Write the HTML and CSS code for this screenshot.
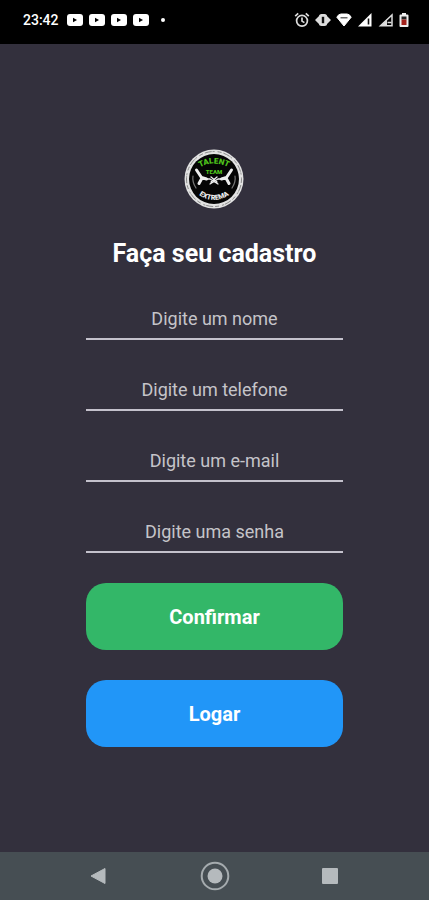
FILE: index.html
```html
<!DOCTYPE html>
<html lang="pt-BR">
<head>
<meta charset="utf-8">
<meta name="viewport" content="width=device-width, initial-scale=1">
<title>Cadastro</title>
<link rel="stylesheet" href="styles.css">
</head>
<body>
<header class="status">
  <div class="status-left">
    <span class="clock">23:42</span>
    <svg class="video" viewBox="0 0 16 12"><rect width="16" height="12" rx="3"/><path class="cut" d="M6 3.8v4.4L10 6z"/></svg>
    <svg class="video" viewBox="0 0 16 12"><rect width="16" height="12" rx="3"/><path class="cut" d="M6 3.8v4.4L10 6z"/></svg>
    <svg class="video" viewBox="0 0 16 12"><rect width="16" height="12" rx="3"/><path class="cut" d="M6 3.8v4.4L10 6z"/></svg>
    <svg class="video" viewBox="0 0 16 12"><rect width="16" height="12" rx="3"/><path class="cut" d="M6 3.8v4.4L10 6z"/></svg>
    <span class="dot"></span>
  </div>
  <div class="status-right">
    <svg viewBox="0 0 16 16"><g fill="none" stroke="#ddd" stroke-width="1.7"><circle cx="8" cy="8.8" r="5.4"/><path d="M8 5.5v3.600l2.400 1.500M1.200 4.200l3-2.800M14.800 4.200l-3-2.800"/></g></svg>
    <svg viewBox="0 0 16 16"><path fill="#ddd" d="M0 8l5-5v10zM16 8l-5-5v10z"/><rect x="4" y="2" width="8" height="12" rx="2.500" fill="#ddd"/><rect x="6.800" y="4.800" width="2.400" height="6.400" fill="#111"/></svg>
    <svg viewBox="0 0 16 16"><path fill="#fff" stroke="#fff" stroke-linejoin="round" d="M.8 5.200Q2.500 2 5 2h6q2.500 0 4.200 3.200L8 14z"/><path d="M4.500 5.800h7" fill="none" stroke="#444" stroke-width="1.200"/></svg>
    <svg viewBox="0 0 16 16"><path fill="#fff" d="M14.500 1v13.500H1z"/><path d="M11.500 6.500v6" stroke="#111" stroke-width="1.600"/></svg>
    <svg viewBox="0 0 16 16"><path fill="none" stroke="#ddd" stroke-width="1.500" d="M14 3v10.800H2.500z"/><path fill="#ddd" d="M9 7.500v6.500H2.500z"/><path d="M9.500 10.500h4" stroke="#ddd" stroke-width="1.500"/></svg>
    <svg class="battery" viewBox="0 0 10 16"><path fill="#eee" d="M3 1h4v1.500h1.500q1 0 1 1V14q0 1-1 1h-7q-1 0-1-1V3.500q0-1 1-1H3z"/><path fill="#222" d="M2.500 4.500h5v3h-5z"/><path fill="#a3221c" d="M2.500 7.500h5V13h-5z"/></svg>
  </div>
</header>
<main class="screen">
  <form class="form">
    <svg class="logo" viewBox="0 0 60 60" role="img" aria-label="Logo">
      <defs>
        <path id="arc-top" d="M9 23Q30 6 51 23"/>
        <path id="arc-bottom" d="M9 41Q30 61 51 41"/>
      </defs>
      <circle cx="30" cy="30" r="29.500" fill="#e2e2e2"/>
      <circle cx="30" cy="30" r="27.500" fill="none" stroke="#8a8a8a" stroke-width="1" stroke-dasharray="4 2 7 1 2 3"/>
      <circle cx="30" cy="30" r="25" fill="#050505"/>
      <text class="logo-top"><textPath href="#arc-top" startOffset="50%">TALENT</textPath></text>
      <text class="logo-team" x="30" y="25">TEAM</text>
      <g fill="none" stroke="#eee" stroke-linecap="round" stroke-linejoin="round">
        <path stroke-width="3" d="M12.500 21l5 7.500 5 1.500M18 29l-3 5.500M47.500 21l-5 7.500-5 1.500M42 29l3 5.500"/>
        <path stroke-width="1.300" d="M22 30h4l8 5M38 30h-4l-8 5M27 28l6 5M33 28l-6 5"/>
        <path stroke="#777" stroke-width="1.200" d="M9 27q-1 6 3 12M51 27q1 6-3 12"/>
      </g>
      <text class="logo-bottom"><textPath href="#arc-bottom" startOffset="50%">EXTREMA</textPath></text>
    </svg>
    <h1 class="title">Faça seu cadastro</h1>
    <input class="field" type="text" placeholder="Digite um nome" aria-label="Nome">
    <input class="field" type="tel" placeholder="Digite um telefone" aria-label="Telefone">
    <input class="field" type="email" placeholder="Digite um e-mail" aria-label="E-mail">
    <input class="field" type="password" placeholder="Digite uma senha" aria-label="Senha">
    <button class="button confirm" type="submit">Confirmar</button>
    <button class="button login" type="button">Logar</button>
  </form>
</main>
<nav class="navbar">
  <button type="button" aria-label="Voltar"><svg viewBox="0 0 30 30"><path d="M7 15l14-7.500v15z" stroke-linejoin="round" stroke="#b5babd"/></svg></button>
  <button type="button" aria-label="Início"><svg viewBox="0 0 30 30"><circle cx="15" cy="15" r="7.500"/><circle class="ring" cx="15" cy="15" r="13.300"/></svg></button>
  <button type="button" aria-label="Recentes"><svg viewBox="0 0 30 30"><rect x="7" y="7" width="16" height="16" rx="1"/></svg></button>
</nav>
</body>
</html>
```
FILE: styles.css
```css
* { box-sizing: border-box; }

body {
  margin: 0;
  min-height: 100vh;
  display: flex;
  flex-direction: column;
  background: #33303d;
  color: #fff;
  font-family: Roboto, sans-serif;
}

.status {
  height: 44px;
  padding: 0 20px 5px 23px;
  display: flex;
  align-items: center;
  justify-content: space-between;
  background: #000;
}

.status-left,
.status-right {
  display: flex;
  align-items: center;
  gap: 6px;
}

.status-right { gap: 5px; }

.clock {
  margin-right: 2px;
  font-size: 14px;
  font-weight: 500;
}

.video {
  width: 16px;
  height: 12px;
  fill: #fff;
}

.video .cut { fill: #000; }

.dot {
  width: 4px;
  height: 4px;
  margin-left: 6px;
  border-radius: 50%;
  background: #fff;
}

.status-right svg {
  width: 16px;
  height: 16px;
}

.status-right .battery { width: 10px; }

.screen {
  flex: 1;
  display: flex;
  justify-content: center;
  align-items: center;
}

.form {
  width: 60%;
  display: flex;
  flex-direction: column;
  gap: 30px;
}

.logo {
  width: 60px;
  height: 60px;
  align-self: center;
}

.logo text {
  font-weight: 900;
  text-anchor: middle;
}

.logo-top { font-size: 8px; fill: #4fc41c; }
.logo-team { font-size: 6px; fill: #4fc41c; }
.logo-bottom { font-size: 7px; fill: #eee; }

.title {
  margin: 0;
  font-size: 25px;
  line-height: 30px;
  font-weight: 700;
  text-align: center;
  white-space: nowrap;
}

.field {
  width: 100%;
  height: 41px;
  padding: 0;
  border: 0;
  border-bottom: 2px solid #c4c1cc;
  border-radius: 0;
  background: transparent;
  color: #fff;
  font: 400 18px Roboto, sans-serif;
  text-align: center;
  outline: none;
}

.field::placeholder {
  color: #c5c4c9;
  opacity: 1;
}

.button {
  height: 67px;
  padding: 0;
  border: 0;
  border-radius: 20px;
  color: #fff;
  font: 700 20px Roboto, sans-serif;
}

.confirm { background: #33b768; }
.login { background: #2196f8; }

.navbar {
  height: 48px;
  padding: 0 41px;
  display: flex;
  align-items: center;
  background: #464e53;
}

.navbar button {
  flex: 1;
  height: 48px;
  padding: 0;
  border: 0;
  background: none;
}

.navbar svg {
  display: block;
  width: 30px;
  height: 30px;
  margin: 0 auto;
  fill: #b5babd;
}

.navbar .ring {
  fill: none;
  stroke: #a5abae;
  stroke-width: 2;
}
```
